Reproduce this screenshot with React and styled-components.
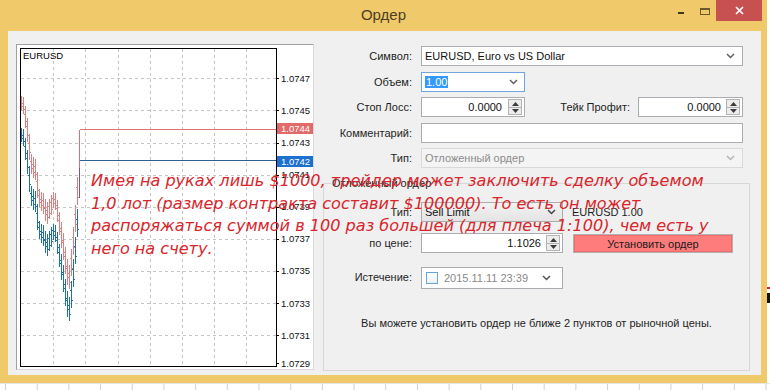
import React from 'react';
import styled, { createGlobalStyle } from 'styled-components';

const Global = createGlobalStyle`
  html, body { margin: 0; padding: 0; background: #fff; }
  body { width: 770px; height: 390px; overflow: hidden; font-family: "Liberation Sans", Arial, sans-serif; }
`;

const Page = styled.div`
  width: 770px;
  height: 390px;
  display: grid;
  grid-template-columns: 767px 3px;
  grid-template-rows: 383px 7px;
  background: #fff;
`;

const Window = styled.div`
  background: #f0c96b;
  display: flex;
  flex-direction: column;
`;

const TitleBar = styled.div`
  height: 31px;
  display: grid;
  grid-template-columns: 1fr auto 1fr;
  align-items: start;
`;

const Title = styled.div`
  grid-column: 2;
  line-height: 30px;
  font-size: 15px;
  color: #4b3f1f;
`;

const Controls = styled.div`
  grid-column: 3;
  justify-self: end;
  display: flex;
  margin-right: 5px;
`;

const CtlButton = styled.div`
  width: ${p => p.$w}px;
  height: 21px;
  display: flex;
  justify-content: center;
  align-items: flex-start;
  padding-top: ${p => p.$pt || 0}px;
  box-sizing: border-box;
  background: ${p => (p.$close ? '#c75050' : 'transparent')};
`;

const MinDash = styled.span`
  width: 6px;
  height: 2px;
  background: #3a3320;
`;

const MaxBox = styled.span`
  width: 10px;
  height: 7px;
  box-sizing: border-box;
  border: 1px solid #6b5a2e;
  border-top-width: 2px;
`;

const Client = styled.div`
  flex: 1;
  margin: 0 6px 8px 8px;
  background: #f0f0f0;
  position: relative;
  display: flex;
  padding: 13px 0 0 8px;
  box-sizing: border-box;
  font-size: 11px;
  color: #1e1e1e;
`;

const ChartFrame = styled.div`
  width: 298px;
  height: 326px;
  box-sizing: border-box;
  border: 1px solid;
  border-color: #a0a0a0 #dadada #dadada #a0a0a0;
  background: #fff;
  flex: none;
  svg { display: block; }
`;

const FormPane = styled.div`
  flex: 1;
  display: flex;
  flex-direction: column;
  padding: 2px 11px 4px 6px;
  box-sizing: border-box;
`;

const FieldGrid = styled.div`
  display: grid;
  grid-template-columns: 92px 1fr;
  column-gap: 9px;
  row-gap: 5.5px;
  grid-auto-rows: 20px;
  margin-right: 7px;
`;

const Label = styled.span`
  text-align: right;
  align-self: center;
  white-space: nowrap;
  color: #1e1e1e;
  padding-right: ${p => p.$pr || 0}px;
  flex: ${p => (p.$grow ? 1 : 'none')};
`;

const Box = styled.div`
  box-sizing: border-box;
  height: ${p => p.$h || 20}px;
  width: ${p => (p.$w ? p.$w + 'px' : 'auto')};
  flex: none;
  border: 1px solid ${p => (p.$focus ? '#6fa6df' : p.$disabled ? '#d9d9d9' : '#abadb3')};
  background: ${p => (p.$disabled ? '#f4f4f4' : p.$button ? 'linear-gradient(#f2f2f2, #e4e4e4)' : '#fff')};
  border-color: ${p => (p.$button ? '#acacac' : undefined)};
  display: flex;
  align-items: center;
  padding: 0 2px 0 3px;
  color: ${p => (p.$disabled ? '#8c8c8c' : '#111')};
  overflow: hidden;
`;

const BoxText = styled.span`
  flex: 1;
  white-space: nowrap;
  overflow: hidden;
  text-align: ${p => (p.$right ? 'right' : 'left')};
  padding-right: ${p => p.$pr || 0}px;
  color: ${p => p.$color || 'inherit'};
`;

const Selected = styled.span`
  background: #3399ff;
  color: #fff;
  padding: 1px 1px;
`;

const Row = styled.div`
  display: flex;
  align-items: center;
`;

const SpinWrap = styled.div`
  width: 14px;
  height: 16px;
  box-sizing: border-box;
  border: 1px solid #b4b4b4;
  background: #ececec;
  display: grid;
  grid-template-rows: 1fr 1fr;
  flex: none;
  svg { display: block; margin: auto; }
  & > div + div { border-top: 1px solid #b4b4b4; }
`;

const SpinHalf = styled.div`
  display: flex;
`;

const ChevronIcon = styled.svg`
  flex: none;
  margin-right: ${p => p.$mr || 5}px;
`;

const GroupBox = styled.fieldset`
  flex: 1;
  margin: 8px 0 0 3px;
  padding: 12px 0 0 0;
  border: 1px solid #d7d7d7;
  min-width: 0;
  display: flex;
  flex-direction: column;
`;

const Legend = styled.legend`
  margin-left: 7px;
  padding: 0 1px;
  line-height: 14px;
  font-size: 11px;
  color: #222;
`;

const GroupGrid = styled.div`
  display: grid;
  grid-template-columns: 88px 142px auto;
  grid-template-rows: 20px 20px 22px;
  column-gap: 9px;
  row-gap: 11px;
  & > :nth-child(n + 7) { margin-top: 3px; }
`;

const Info = styled.span`
  align-self: center;
  white-space: nowrap;
  color: #1e1e1e;
`;

const ActionButton = styled.div`
  width: 160px;
  height: 19px;
  box-sizing: border-box;
  margin: 1px 0 0 1px;
  border: 1px solid #b2b2b2;
  box-shadow: inset 0 0 0 1px #ef6a6a;
  background: #ff7c7c;
  display: flex;
  align-items: center;
  justify-content: center;
  color: #1a1a1a;
`;

const CheckSquare = styled.span`
  width: 12px;
  height: 12px;
  box-sizing: border-box;
  border: 1px solid #6aa6d8;
  background: linear-gradient(#fbfdff, #eaf3fb);
  margin: 0 6px 0 1px;
  flex: none;
`;

const Note = styled.div`
  margin-top: 30px;
  line-height: 14px;
  text-align: center;
  color: #1e1e1e;
`;

const Overlay = styled.div`
  position: absolute;
  left: 83px;
  top: 139px;
  white-space: pre;
  font-family: "DejaVu Sans", Verdana, sans-serif;
  font-style: italic;
  font-size: 16.1px;
  line-height: 22.7px;
  color: #d8262c;
  pointer-events: none;
`;

const RightStrip = styled.div`
  background: #fff;
  display: flex;
  flex-direction: column;
`;

const Mark = styled.span`
  margin-top: ${p => p.$top}px;
  height: ${p => p.$h}px;
  background: ${p => p.$color};
`;

const BottomStrip = styled.div`
  grid-column: 1 / span 2;
  background-color: #fff;
  background-image: linear-gradient(90deg, #cfcfcf 0 1px, transparent 1px);
  background-size: 31.7px 100%;
  background-position: 5px 0;
  border-top: 1px solid #e6e6e6;
`;

const Chevron = ({ color = '#5f5f5f', mr }) => (
  <ChevronIcon $mr={mr} width="9" height="6" viewBox="0 0 9 6">
    <path d="M1 1 L4.5 4.5 L8 1" fill="none" stroke={color} strokeWidth="1.5" />
  </ChevronIcon>
);

const Spinner = () => (
  <SpinWrap>
    <SpinHalf>
      <svg width="7" height="4" viewBox="0 0 7 4"><path d="M0 4 L3.5 0 L7 4 Z" fill="#3c3c3c" /></svg>
    </SpinHalf>
    <SpinHalf>
      <svg width="7" height="4" viewBox="0 0 7 4"><path d="M0 0 L3.5 4 L7 0 Z" fill="#3c3c3c" /></svg>
    </SpinHalf>
  </SpinWrap>
);

/* ---------- chart ---------- */
const bidBars = [
  [21, 128, 142], [23, 129, 146], [25, 138, 160], [27, 150, 174], [29, 166, 192], [31, 186, 206],
  [33, 189, 210], [35, 191, 212], [37, 204, 230], [39, 221, 239], [41, 224, 243], [43, 225, 246],
  [45, 231, 253], [47, 234, 256], [49, 231, 251], [51, 227, 247], [53, 224, 240], [55, 225, 242],
  [57, 232, 254], [59, 244, 267], [61, 254, 280], [63, 265, 292], [65, 279, 306], [67, 291, 317],
  [69, 297, 321], [71, 281, 308], [73, 259, 287], [75, 237, 264], [77, 209, 237],
];

const Bar = ({ x, top, bottom, color }) => {
  const h = bottom - top;
  const o = Math.round(top + h * 0.35) + 0.5;
  const c = Math.round(bottom - h * 0.3) + 0.5;
  const xl = Math.round(x);
  return (
    <g fill={color}>
      <rect x={xl} y={top} width="1" height={h} />
      <rect x={xl - 1} y={o - 0.5} width="1" height="1" />
      <rect x={xl + 1} y={c - 0.5} width="1" height="1" />
    </g>
  );
};

const prices = [
  ['1.0747', 78.3], ['1.0745', 110.4], ['1.0743', 142.5], ['1.0741', 174.6], ['1.0739', 206.7],
  ['1.0737', 238.8], ['1.0735', 270.9], ['1.0733', 303], ['1.0731', 335.1], ['1.0729', 363],
];

const Chart = () => {
  const hLines = [];
  for (let k = 0; k < 9; k++) hLines.push(Math.round(78.3 + 32.1 * k) + 0.5);
  const vLines = [];
  for (let k = 0; k < 7; k++) vLines.push(Math.round(53.3 + 32.1 * k) + 0.5);
  return (
    <svg width="296" height="324" viewBox="0 0 296 324" shapeRendering="crispEdges">
      <g transform="translate(-17 -45)" fontFamily='"Liberation Sans", Arial, sans-serif' fontSize="9.5">
        {hLines.map(y => (
          <line key={'h' + y} x1="21" y1={y} x2="276" y2={y} stroke="#c4c4c4" strokeDasharray="3 3" />
        ))}
        {vLines.map(x => (
          <line key={'v' + x} x1={x} y1="49" x2={x} y2="367" stroke="#c4c4c4" strokeDasharray="3 3" />
        ))}
        {bidBars.map(([x, t, b]) => (
          <Bar key={'r' + x} x={x} top={t - 32} bottom={b - 32} color="#e87a7a" />
        ))}
        {bidBars.map(([x, t, b]) => (
          <Bar key={'b' + x} x={x} top={t} bottom={b} color="#1d6cc4" />
        ))}
        <line x1="79.5" y1="129.5" x2="276" y2="129.5" stroke="#e07070" />
        <line x1="79.5" y1="129.5" x2="79.5" y2="168" stroke="#e07070" />
        <line x1="79.5" y1="160.5" x2="276" y2="160.5" stroke="#2a5f8f" />
        <line x1="79.5" y1="168" x2="79.5" y2="198" stroke="#7a4fb0" />
        <rect x="20.5" y="48.5" width="256" height="318" fill="none" stroke="#000" />
        <g shapeRendering="auto">
          <text x="23" y="59" fill="#000">EURUSD</text>
          {prices.map(([p, y]) => (
            <text key={p} x="281" y={y + 3.5} fill="#111">{p}</text>
          ))}
        </g>
        {prices.map(([p, y]) => (
          <line key={'t' + p} x1="276" y1={Math.round(y) + 0.5} x2="279" y2={Math.round(y) + 0.5} stroke="#000" />
        ))}
        <rect x="277" y="123" width="36" height="11" fill="#e16a6a" />
        <rect x="277" y="155.5" width="36" height="11" fill="#1d6fd0" />
        <g shapeRendering="auto">
          <text x="281" y="132" fill="#fff">1.0744</text>
          <text x="281" y="164.5" fill="#fff">1.0742</text>
        </g>
      </g>
    </svg>
  );
};

const overlayText = `Имея на руках лишь $1000, трейдер может заключить сделку объемом
1,0 лот (размер контракта составит $100000). То есть он может
распоряжаться суммой в 100 раз большей (для плеча 1:100), чем есть у
него на счету.`;

export default function App() {
  return (
    <>
      <Global />
      <Page>
        <Window>
          <TitleBar>
            <Title>Ордер</Title>
            <Controls>
              <CtlButton $w={24} $pt={12}><MinDash /></CtlButton>
              <CtlButton $w={23} $pt={8}><MaxBox /></CtlButton>
              <CtlButton $w={46} $pt={6} $close>
                <svg width="9" height="9" viewBox="0 0 9 9">
                  <path d="M1 1 L8 8 M8 1 L1 8" stroke="#fff" strokeWidth="1.7" />
                </svg>
              </CtlButton>
            </Controls>
          </TitleBar>
          <Client>
            <ChartFrame><Chart /></ChartFrame>
            <FormPane>
              <FieldGrid>
                <Label>Символ:</Label>
                <Box>
                  <BoxText>EURUSD, Euro vs US Dollar</BoxText>
                  <Chevron mr={5} />
                </Box>

                <Label>Объем:</Label>
                <Row>
                  <Box $w={104} $focus>
                    <BoxText><Selected>1.00</Selected></BoxText>
                    <Chevron mr={4} />
                  </Box>
                </Row>

                <Label>Стоп Лосс:</Label>
                <Row>
                  <Box $w={104}>
                    <BoxText $right $pr={6}>0.0000</BoxText>
                    <Spinner />
                  </Box>
                  <Label $grow $pr={8}>Тейк Профит:</Label>
                  <Box $w={105}>
                    <BoxText $right $pr={5}>0.0000</BoxText>
                    <Spinner />
                  </Box>
                </Row>

                <Label>Комментарий:</Label>
                <Box />

                <Label>Тип:</Label>
                <Box $disabled>
                  <BoxText>Отложенный ордер</BoxText>
                  <Chevron color="#b4b4b4" mr={5} />
                </Box>
              </FieldGrid>

              <GroupBox>
                <Legend>Отложенный ордер</Legend>
                <GroupGrid>
                  <Label>Тип:</Label>
                  <Box $button>
                    <BoxText>Sell Limit</BoxText>
                    <Chevron color="#444" mr={4} />
                  </Box>
                  <Info>EURUSD 1.00</Info>

                  <Label>по цене:</Label>
                  <Box>
                    <BoxText $right $pr={5}>1.1026</BoxText>
                    <Spinner />
                  </Box>
                  <ActionButton>Установить ордер</ActionButton>

                  <Label>Истечение:</Label>
                  <Box $h={22}>
                    <CheckSquare />
                    <BoxText $color="#8a8a8a">2015.11.11 23:39</BoxText>
                    <Chevron color="#555" mr={9} />
                  </Box>
                  <span />
                </GroupGrid>
                <Note>Вы можете установить ордер не ближе 2 пунктов от рыночной цены.</Note>
              </GroupBox>
            </FormPane>
            <Overlay>{overlayText}</Overlay>
          </Client>
        </Window>
        <RightStrip>
          <Mark $top={287} $h={2} $color="#d8262c" />
          <Mark $top={4} $h={10} $color="#111" />
        </RightStrip>
        <BottomStrip />
      </Page>
    </>
  );
}
